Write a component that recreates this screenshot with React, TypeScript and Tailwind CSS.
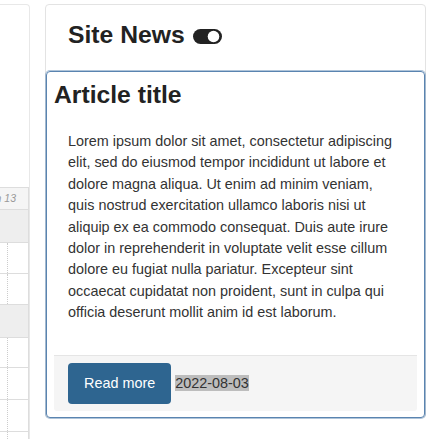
import React from 'react';

const rows = [
  { h: 'h-[33px]', shaded: true },
  { h: 'h-[31px]', shaded: false },
  { h: 'h-[31px]', shaded: false },
  { h: 'h-[33px]', shaded: true },
  { h: 'h-[30px]', shaded: false },
  { h: 'h-[32px]', shaded: false },
  { h: 'h-[32px]', shaded: false },
  { h: 'h-[32px]', shaded: false },
];

const ToggleOn: React.FC = () => (
  <svg width="29" height="15" viewBox="0 0 29 15" className="inline-block ml-[8px] align-[-1px]">
    <rect x="0" y="0" width="29" height="15" rx="7.5" fill="#222" />
    <circle cx="20.5" cy="7.5" r="5.8" fill="#fff" />
  </svg>
);

const App: React.FC = () => {
  return (
    <div
      className="flex h-[439px] w-[440px] overflow-hidden bg-white"
      style={{ fontFamily: '"Liberation Sans", Arial, sans-serif' }}
    >
      {/* Left - calendar card, cut off by the window */}
      <div className="mt-1 h-[460px] w-[30px] shrink-0 rounded-tr-[4px] border-t border-r border-[#e8e8e8] bg-white">
        <div className="h-[182px]" />
        <div className="w-[29px] border-r border-[#dddddd]">
          <div className="flex h-[23px] items-center justify-end overflow-hidden border-y border-[#dddddd] bg-[#f5f5f5] pr-[12px]">
            <span className="whitespace-nowrap text-[10.5px] italic text-[#999999]">Mon 13</span>
          </div>
          {rows.map((r, i) => (
            <div key={i} className={`${r.h} flex border-b border-[#dddddd] ${r.shaded ? 'bg-[#eeeeee]' : 'bg-white'}`}>
              {!r.shaded && <div className="w-[8px] border-r border-dotted border-[#cccccc]" />}
            </div>
          ))}
        </div>
      </div>

      {/* Right - Site News card */}
      <div className="ml-[15px] mt-1 w-[381px] shrink-0 self-start rounded-[4px] border border-[#e3e3e3] bg-white">
        <div className="h-[66px] pl-[22px] pt-[16px]">
          <h2 className="text-[24.7px] font-bold leading-[27px] text-[#222222]">
            Site News
            <ToggleOn />
          </h2>
        </div>

        <article className="-mb-px rounded-[4px] border border-[#5a84b0] px-[7px] pb-[6px] pt-[9px] shadow-[0_0_0_1px_rgba(122,156,192,0.6)]">
          <h2 className="text-[24.7px] font-bold leading-[27px] text-[#222222]">Article title</h2>
          <p className="mb-[31px] mt-[23px] px-[14px] text-[14.4px] leading-[21.4px] text-[#333333]">
            Lorem ipsum dolor sit amet, consectetur adipiscing elit, sed do eiusmod tempor incididunt ut labore et
            dolore magna aliqua. Ut enim ad minim veniam, quis nostrud exercitation ullamco laboris nisi ut aliquip ex
            ea commodo consequat. Duis aute irure dolor in reprehenderit in voluptate velit esse cillum dolore eu
            fugiat nulla pariatur. Excepteur sint occaecat cupidatat non proident, sunt in culpa qui officia deserunt
            mollit anim id est laborum.
          </p>
          <div className="rounded-b-[3px] border-t border-[#e5e5e5] bg-[#f5f5f5] px-[14px] py-[7px] text-[14.4px] leading-[21.4px] text-[#333333]">
            <button className="inline-block rounded-[4px] bg-[#2e6590] px-[16px] py-[10px] text-[14.4px] leading-[21.4px] text-white">
              Read more
            </button>{' '}
            <mark className="bg-[#bdbdbd] text-[#333333]">2022-08-03</mark>
          </div>
        </article>
      </div>
    </div>
  );
};

export default App;
